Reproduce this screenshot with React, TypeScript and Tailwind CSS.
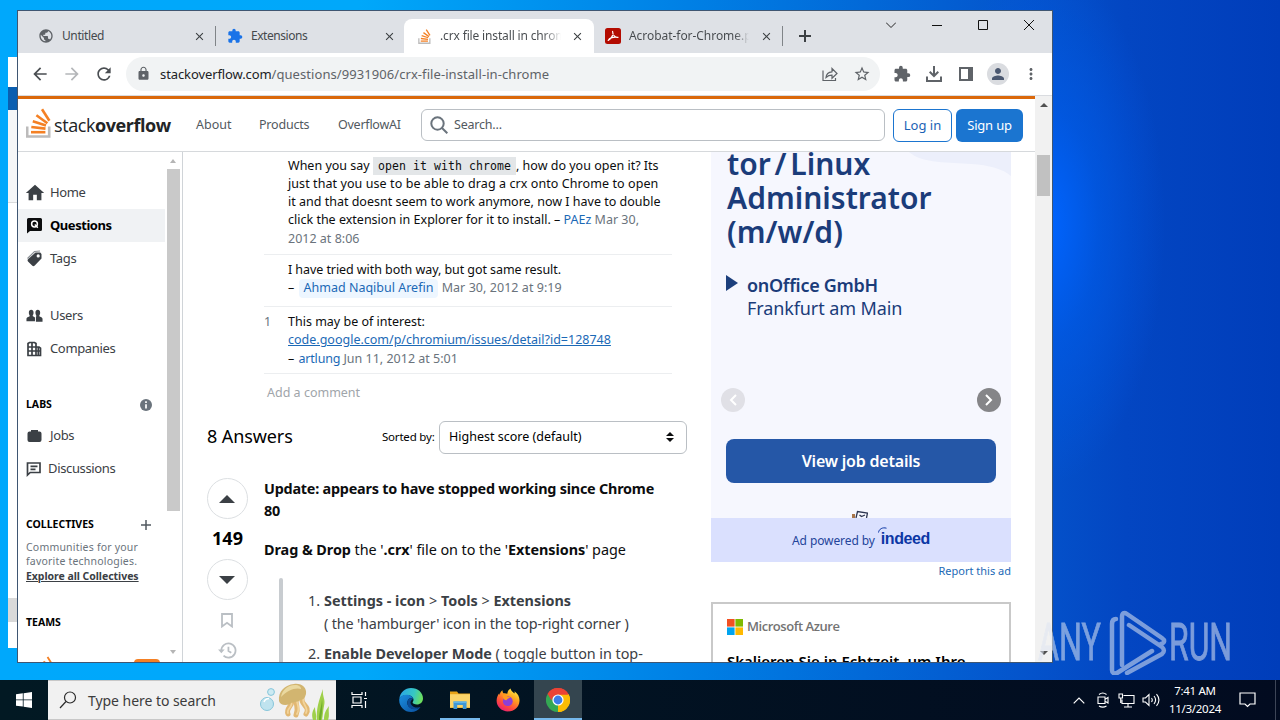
import React from 'react';
import { clsx } from 'clsx';
import {
  MdArrowBack,
  MdArrowForward,
  MdClose,
  MdExtension,
  MdHome,
  MdLock,
  MdMoreVert,
  MdOutlineFileDownload,
  MdPerson,
  MdPublic,
  MdRefresh,
  MdStarBorder,
} from 'react-icons/md';

/* ---------- logos and small drawings ---------- */

function StackLogo({ className }: { className?: string }) {
  return (
    <svg viewBox="0 0 25 30" className={className} fill="none">
      <path d="M1.2 18.5v10h22v-10" stroke="#bcbbbb" strokeWidth="2.6" />
      <g stroke="#f48024" strokeWidth="2.6">
        <path d="M5 24.2h14.4" />
        <path d="M5.3 19l14.2 1.6" />
        <path d="M6.8 13.3l13.2 4.2" />
        <path d="M10.4 7.3l11 8" />
        <path d="M16 1.2l7.4 11.6" />
      </g>
    </svg>
  );
}

function PdfIcon() {
  return (
    <svg viewBox="0 0 16 16" className="w-4 h-4 shrink-0">
      <rect width="16" height="16" rx="2.5" fill="#b30b00" />
      <path
        d="M7.6 3.4c1.4 3-1.2 7.2-4.4 9 1-2.4 5.4-4 9.8-3-2.6.4-5.6-2.4-5.4-6z"
        fill="none"
        stroke="#fff"
        strokeWidth="1.2"
        strokeLinejoin="round"
      />
    </svg>
  );
}

function TabClose({ className }: { className?: string }) {
  return <MdClose className={clsx('w-[13px] h-[13px] shrink-0 text-[#3c4043]', className)} />;
}

function EdgeIcon() {
  return (
    <svg viewBox="0 0 24 24" className="w-6 h-6">
      <defs>
        <linearGradient id="edgeTop" x1="0" y1="0.3" x2="1" y2="0.5">
          <stop offset="0" stopColor="#2aa6e8" />
          <stop offset="0.6" stopColor="#36c7c3" />
          <stop offset="1" stopColor="#6ee05a" />
        </linearGradient>
        <linearGradient id="edgeLow" x1="0" y1="0" x2="1" y2="1">
          <stop offset="0" stopColor="#1b8fe0" />
          <stop offset="1" stopColor="#0a4f9e" />
        </linearGradient>
      </defs>
      <path d="M.4 10.5C1.2 4.4 6 0 12 0c7 0 12 4.8 12 10.4 0 3.7-2.9 6-6 6-2.6 0-4.4-1-4.4-1.9 0-.6.9-.9.9-2.7C14.5 8.700 11.3 7 8 7 4.5 7 1.5 8.2.4 10.5z" fill="url(#edgeTop)" />
      <path d="M.3 10.8C1.2 8.1 4.5 6.6 8 6.7c3 .1 5.7 1.6 6.3 4-3.3-1.6-6 .6-6 4.1 0 3.600 3.7 6.6 8.2 6.1 2-.2 3.8-1.2 4.9-2-2 3.3-5.4 5.1-9.2 5.1C5 24-.5 18 .3 10.8z" fill="url(#edgeLow)" />
      <path d="M8.3 14.8c0 4.2 3.7 7 8.2 6.4 2.2-.3 4-1.3 4.9-2.2-3 1.3-8 .6-9.6-3-.9-2 .4-4.3 2.5-5.3-3.3-1.6-6 .6-6 4.1z" fill="#0b4a94" />
    </svg>
  );
}

function FolderIcon() {
  return (
    <svg viewBox="0 0 22 20" className="w-[22px] h-5">
      <path d="M1 1.5h7l1.5 2H21V18H1z" fill="#e8a317" />
      <path d="M1 4.2h20v13.3H1z" fill="#fbd469" />
      <path d="M4.5 19v-7.5h13V19h-3.7v-4H8.2v4z" fill="#3f97d6" />
      <path d="M4.5 11.500h13V13h-13z" fill="#5fb4ea" />
    </svg>
  );
}

function FirefoxIcon() {
  return (
    <svg viewBox="0 0 24 24" className="w-6 h-6">
      <defs>
        <linearGradient id="foxBody" x1="0.8" y1="0" x2="0.2" y2="1">
          <stop offset="0" stopColor="#fff24a" />
          <stop offset="0.35" stopColor="#ffa41f" />
          <stop offset="0.7" stopColor="#ff4a3d" />
          <stop offset="1" stopColor="#e5177b" />
        </linearGradient>
      </defs>
      <path d="M14.5.5c.4 2.2 2.2 3.2 3.8 5 .6-.5.4-1.5.2-2.3C22 5.8 23.7 9 23.5 13c-.3 6-5.3 10.5-11.5 10.5S.6 18.8.6 12.8c0-3 1-5.6 2.7-7.6 0 .8.2 1.4.4 1.8C4 4.8 5.2 3 6.5 2.2c-.1 1.3.3 2.5 1 3.1 1.6-.2 2.7 0 3.8.5.3-2.3 1.400-4.3 3.2-5.3z" fill="url(#foxBody)" />
      <circle cx="11.8" cy="13.2" r="4.9" fill="#8d3fd6" />
      <path d="M6.5 7c2-.6 3.8.2 5 1.4 1 .2 2.3.3 2.6.6-.4 1.6-3 1.4-3.6 3.2-1.6 0-3.5-1-4-5.2z" fill="#ff9a1f" />
    </svg>
  );
}

function ChromeIcon() {
  return (
    <svg viewBox="0 0 24 24" className="w-6 h-6">
      <path d="M12 12L1.6 6A12 12 0 0 1 22.4 6z" fill="#ea4335" />
      <path d="M12 12L22.4 6A12 12 0 0 1 12 24z" fill="#fbbc05" />
      <path d="M12 12L12 24A12 12 0 0 1 1.6 6z" fill="#34a853" />
      <path d="M12 6.5h10.7A12 12 0 0 1 12 24l5-9z" fill="#fbbc05" />
      <path d="M1.6 6l5.3 9.2L12 12V6.5h-5z" fill="#34a853" />
      <path d="M1.6 6A12 12 0 0 1 22.6 6.5H12L7 9.2 5.5 12.6z" fill="#ea4335" />
      <circle cx="12" cy="12" r="5.6" fill="#fff" />
      <circle cx="12" cy="12" r="4.4" fill="#3b7de9" />
    </svg>
  );
}

function SeaArt() {
  return (
    <svg viewBox="0 0 72 40" className="w-[72px] h-10">
      <circle cx="7" cy="24" r="6.5" fill="#bfe3ee" stroke="#86c6da" />
      <circle cx="11" cy="12" r="3.4" fill="#cdeaf2" stroke="#86c6da" />
      <path d="M4 22c1-3 3-3.5 5-3.5" stroke="#fff" strokeWidth="1.5" fill="none" />
      <g fill="none" stroke="#e2b873" strokeWidth="5" strokeLinecap="round">
        <path d="M31 20c4 4-6 8-3 14" />
        <path d="M36 20c0 7 3 8 0 15" />
        <path d="M42 18c-2 7 9 8 4 16" />
      </g>
      <g fill="none" stroke="#f2d49c" strokeWidth="1.800" strokeLinecap="round">
        <path d="M31 22c3 4-5 7-3 11" />
        <path d="M37 21c1 6 3 8 0 13" />
        <path d="M43 19c0 7 6 9 3 14" />
      </g>
      <path d="M19 21C18 11 25 5 34 4c8-1 13 4 12 10-1 4-3 6-6 6-3 3-7 1-10 4-5 2-10 1-11-3z" fill="#d2b570" />
      <path d="M21 17c1-6 6-12 14-12 4 0 6 2 6 4-5-2-14 1-20 8z" fill="#ead9a0" />
      <path d="M53 40c-2-6 0-10 2-13 0 5 2 8 1 13zM57 40c-1-11 2-20 6-31-1 8 3 10 1 17-1 5-1 9-2 14zM64 40c0-7 2-10 5-14-1 5 1 9-1 14z" fill="#9fd04a" />
      <path d="M59 40c0-9 3-14 3-22 1 8 0 14-1 22z" fill="#6fae2c" />
    </svg>
  );
}

/* ---------- browser chrome ---------- */

function TabStrip() {
  return (
    <div className="flex h-[42px] bg-[#dee1e6] text-[12px] text-[#45494d]">
      <div className="flex items-center w-[198px] pl-5 pt-2">
        <MdPublic className="w-4 h-4 shrink-0 text-[#5f6368]" />
        <span className="ml-2 w-[132px] tracking-[-0.4px]">Untitled</span>
        <TabClose />
        <span className="ml-[9px] w-px h-5 bg-[#808488]" />
      </div>
      <div className="flex items-center w-[188px] pl-[11px] pt-2">
        <MdExtension className="w-4 h-4 shrink-0 text-[#1a73e8]" />
        <span className="ml-2 w-[132px] tracking-[-0.45px]">Extensions</span>
        <TabClose />
      </div>
      <div className="flex items-center w-[190px] h-[34px] mt-2 pl-[14px] rounded-t-lg bg-white">
        <StackLogo className="w-[13px] h-[15px] shrink-0" />
        <span className="ml-[9px] w-[121px] mr-[10px] overflow-hidden whitespace-nowrap bg-gradient-to-r from-[#45494d] from-85% to-white bg-clip-text text-transparent tracking-[-0.15px]">
          .crx file install in chrome
        </span>
        <TabClose />
      </div>
      <div className="flex items-center w-[190px] pl-[11px] pt-2">
        <PdfIcon />
        <span className="ml-2 w-[120px] mr-[11px] overflow-hidden whitespace-nowrap bg-gradient-to-r from-[#45494d] from-88% to-[#dee1e6] bg-clip-text text-transparent tracking-[-0.05px]">
          Acrobat-for-Chrome.pdf
        </span>
        <TabClose />
        <span className="ml-[9px] w-px h-5 bg-[#808488]" />
      </div>
      <div className="flex items-center pl-[15px] pt-2">
        <svg viewBox="0 0 12 12" className="w-3 h-3" stroke="#3c4043" strokeWidth="2">
          <path d="M6 0v12M0 6h12" />
        </svg>
      </div>
      <div className="flex items-start ml-auto pt-[9px] mr-[18px]">
        <svg viewBox="0 0 10 10" className="w-[10px] h-[10px] mr-[36px]" fill="none" stroke="#222">
          <path d="M0 2.5l5 5 5-5" />
        </svg>
        <svg viewBox="0 0 10 10" className="w-[10px] h-[10px] mr-[36px]" stroke="#111">
          <path d="M0 5.5h10" />
        </svg>
        <svg viewBox="0 0 10 10" className="w-[10px] h-[10px] mr-[36px]" fill="none" stroke="#111">
          <path d="M.5.5h9v9h-9z" />
        </svg>
        <svg viewBox="0 0 10 10" className="w-[10px] h-[10px]" fill="none" stroke="#111">
          <path d="M0 0l10 10M10 0L0 10" />
        </svg>
      </div>
    </div>
  );
}

function Toolbar() {
  return (
    <div className="flex items-center h-[43px] bg-white border-b border-[#dadce0] text-[#5f6368]">
      <MdArrowBack className="w-5 h-5 ml-3 text-[#4a4e52]" />
      <MdArrowForward className="w-5 h-5 ml-3 text-[#b4b6b9]" />
      <MdRefresh className="w-5 h-5 ml-3 text-[#4a4e52]" />
      <div className="flex items-center w-[754px] h-[34px] ml-3 pl-[10px] pr-[9px] rounded-full bg-[#f1f3f4]">
        <MdLock className="w-[15px] h-[15px] mb-px" />
        <span className="ml-[9px] mt-px text-[13px] whitespace-nowrap tracking-[0.07px]">
          <span className="text-[#202124] tracking-[-0.1px]">stackoverflow.com</span>/questions/9931906/crx-file-install-in-chrome
        </span>
        <svg viewBox="0 0 16 16" className="w-4 h-4 ml-auto" fill="none" stroke="#5f6368" strokeWidth="1.200">
          <path d="M1 4.5V14.5h12.5V12" />
          <path d="M4 11.5c.3-3.8 2.5-5.5 6-5.7V2.5l5 5-5 4.8V9.2c-2.6 0-4.3.7-6 2.3z" />
        </svg>
        <MdStarBorder className="w-[18px] h-[18px] ml-[15px]" />
      </div>
      <MdExtension className="w-[18px] h-[18px] ml-[13px]" />
      <svg viewBox="0 0 16 16" className="w-4 h-4 ml-[15px]" fill="none" stroke="#5f6368" strokeWidth="2">
        <path d="M8 0v9.500M3.700 5.800L8 10l4.300-4.200M1 10.500V15h14v-4.500" />
      </svg>
      <svg viewBox="0 0 14 14" className="w-[14px] h-[14px] ml-[17px]">
        <path d="M1 1h12v12H1z" fill="none" stroke="#5f6368" strokeWidth="2" />
        <path d="M9 0h5v14H9z" fill="#5f6368" />
      </svg>
      <span className="flex items-center justify-center w-[22px] h-[22px] ml-[14px] rounded-full bg-[#dadce0]">
        <MdPerson className="w-[18px] h-[18px] text-[#4b5870]" />
      </span>
      <MdMoreVert className="w-[18px] h-[18px] ml-[13px]" />
    </div>
  );
}

/* ---------- page ---------- */

function SiteHeader() {
  return (
    <header className="flex items-center h-[56px] border-t-[3px] border-b border-t-[#da680b] border-b-[#d6d9dc] pl-2 text-[13px] text-[#525960] whitespace-nowrap">
      <StackLogo className="w-[25px] h-[30px] -mt-1" />
      <span className="ml-[3px] mt-px w-[142px] font-['Open_Sans'] text-[18px] text-[#222426] tracking-[-0.42px]">
        stack<b>overflow</b>
      </span>
      <span className="w-[63px] mt-px text-[12.5px]">About</span>
      <span className="w-[79px] mt-px text-[12.5px] tracking-[-0.2px]">Products</span>
      <span className="w-[83px] mt-px text-[12.5px] tracking-[-0.25px]">OverflowAI</span>
      <div className="flex items-center w-[464px] h-8 px-2 rounded-md border border-[#babfc4]">
        <svg viewBox="0 0 18 18" className="w-[18px] h-[18px]" fill="none" stroke="#6a737c" strokeWidth="2">
          <circle cx="7.500" cy="7.500" r="6.200" />
          <path d="M12 12l5.300 5.300" />
        </svg>
        <span className="ml-[6px] mt-px text-[12.5px] tracking-[-0.2px]">Search...</span>
      </div>
      <span className="flex items-center justify-center w-[59px] h-[33px] ml-2 pt-px rounded-md border border-[#1b75d0] text-[#1b62b5]">
        Log in
      </span>
      <span className="flex items-center justify-center w-[67px] h-[33px] ml-1 pt-px rounded-md bg-[#1b75d0] text-white tracking-[-0.2px]">
        Sign up
      </span>
    </header>
  );
}

function NavRow({ icon, label, active }: { icon: React.ReactNode; label: string; active?: boolean }) {
  return (
    <div
      className={clsx(
        'flex items-center h-[33px] w-[147px] pl-2 text-[13px]',
        active ? 'bg-[#f0f2f4] font-bold text-black tracking-[-0.45px]' : 'text-[#3b4045] tracking-[-0.35px]'
      )}
    >
      <span className="flex w-6 shrink-0">{icon}</span>
      {label}
    </div>
  );
}

function LeftNav() {
  return (
    <nav className="flex w-[165px] h-[510px] border-r border-[#d0d4d8] overflow-hidden">
      <div className="w-[148px] pt-6 shrink-0">
        <NavRow icon={<MdHome className="w-[22px] h-[22px] -ml-[2px]" />} label="Home" />
        <NavRow
          active
          label="Questions"
          icon={
            <svg viewBox="0 0 17 17" className="w-[17px] h-[17px]">
              <path d="M2.500 1h12A1.500 1.500 0 0 1 16 2.500v10a1.500 1.500 0 0 1-1.500 1.500H4l-3 2.500v-14A1.500 1.500 0 0 1 2.500 1z" fill="#0c0d0e" />
              <circle cx="8.500" cy="7" r="2.900" fill="none" stroke="#fff" strokeWidth="1.500" />
              <path d="M8.800 7.500l3 3.200" stroke="#fff" strokeWidth="1.300" />
            </svg>
          }
        />
        <NavRow
          label="Tags"
          icon={
            <svg viewBox="0 0 17 17" className="w-[17px] h-[17px]">
              <path d="M1.500 8.500l7-7L14 1" fill="none" stroke="#8c9196" strokeWidth="1.200" />
              <path fillRule="evenodd" d="M9.500 2.500h4.700L15.500 4v4.500l-7 7.200c-.7.600-1.500.6-2.100 0L2 11.400c-.6-.6-.6-1.500 0-2.100zM12.200 4.300a1.600 1.600 0 1 0 0 3.200 1.600 1.600 0 0 0 0-3.200z" fill="#3b4045" />
            </svg>
          }
        />
        <div className="h-6" />
        <NavRow
          label="Users"
          icon={
            <svg viewBox="0 0 18 14" className="w-[17px] h-[14px]" fill="#3b4045">
              <path d="M3 3.500C3 1.500 4 .5 5.500.5S8 1.500 8 3.500 7 6 7 7l2.500 1.500v4H.5v-2.500C.5 8 4 8 4 7S3 5.500 3 3.500z" />
              <path d="M10 3.500c0-2 1-3 2.500-3s2.500 1 2.500 3S14 6 14 7s3.500 1 3.500 3v3h-7V8L11 7c0-1-1-1.500-1-3.500z" />
            </svg>
          }
        />
        <NavRow
          label="Companies"
          icon={
            <svg viewBox="0 0 16 16" className="w-4 h-4" fill="none" stroke="#3b4045" strokeWidth="1.700">
              <path d="M2 14.500V2.500L3.500 1.500H8.500L10 2.500V14.500M6 1.500v13M2 6h8M2 10h12.500M10 6h3l1.500 1.200v7.300H1.200M12.300 6v8" />
            </svg>
          }
        />
        <div className="flex items-center justify-between h-[18px] mt-[31px] pl-2 pr-[14px] text-[10.5px] font-bold">
          LABS
          <svg viewBox="0 0 12 12" className="w-3 h-3">
            <circle cx="6" cy="6" r="6" fill="#6a737c" />
            <path d="M6 2.200v1.800M6 5.200v4.300" stroke="#fff" strokeWidth="1.700" />
          </svg>
        </div>
        <div className="h-[5px]" />
        <NavRow
          label="Jobs"
          icon={
            <svg viewBox="0 0 17 14" className="w-[17px] h-[14px]" fill="#3b4045">
              <path d="M5 1h7v1.500h1.500a2 2 0 0 1 2 2v6.500a2 2 0 0 1-2 2h-10a2 2 0 0 1-2-2V4.500a2 2 0 0 1 2-2H5z" />
            </svg>
          }
        />
        <div className="flex items-center h-[33px] pl-2 text-[13px] text-[#3b4045] tracking-[-0.35px]">
          <svg viewBox="0 0 16 16" className="w-4 h-4 mr-[6px]" fill="none" stroke="#3b4045" strokeWidth="1.700">
            <path d="M1.500 14V2h12.500v9.500H4.200zM4.500 5.300h7M4.500 8.300h5" />
          </svg>
          Discussions
        </div>
        <div className="flex items-center justify-between h-[18px] mt-[31px] pl-2 pr-[15px] text-[10.5px] font-bold">
          COLLECTIVES
          <svg viewBox="0 0 10 10" className="w-[10px] h-[10px]" stroke="#525960" strokeWidth="1.500">
            <path d="M5 0v10M0 5h10" />
          </svg>
        </div>
        <div className="pl-2 mt-[6px] text-[10.5px] leading-[14px] text-[#6a737c] whitespace-nowrap tracking-[0.2px]">
          Communities for your
          <br />
          favorite technologies.
          <br />
          <b className="text-[#3b4045] underline leading-[16px] tracking-[-0.04px]">Explore all Collectives</b>
        </div>
        <div className="mt-[29px] pl-2 text-[10.5px] leading-[18px] font-bold">TEAMS</div>
        <div className="flex justify-between mt-[25px] pl-[18px] pr-[6px]">
          <StackLogo className="w-[18px] h-[22px]" />
          <span className="w-[26px] h-4 mt-[3px] rounded bg-[#f48024]" />
        </div>
      </div>
      <div className="flex flex-col items-center w-[14px] pt-[7px]">
        <span className="border-x-[3px] border-x-transparent border-b-[4px] border-b-[#b5b5b5]" />
        <span className="w-[13px] h-[342px] mt-[6px] bg-[#c9c9c9]" />
        <span className="mt-[139px] border-x-[3px] border-x-transparent border-t-[4px] border-t-[#b5b5b5]" />
      </div>
    </nav>
  );
}

const link = 'text-[#1b69b6]';
const muted = 'text-[#6a737c]';

function Comments() {
  return (
    <div className="w-[408px] ml-[81px] h-[222px] text-[12.5px] leading-[18.3px] text-[#0c0d0e] whitespace-nowrap">
      <div className="h-[103px] pt-[4.5px] pl-6 border-b border-[#eceef0]">
        When you say{' '}
        <code className="px-[5px] py-[2px] bg-[#e3e6e8] font-['DejaVu_Sans_Mono'] text-[11.5px] tracking-[0.08px]">
          open it with chrome
        </code>
        , how do you open it? Its
        <br />
        <span className="tracking-[0.08px]">just that you use to be able to drag a crx onto Chrome to open</span>
        <br />
        it and that doesnt seem to work anymore, now I have to double
        <br />
        click the extension in Explorer for it to install. – <span className={link}>PAEz</span>{' '}
        <span className={muted}>Mar 30,</span>
        <br />
        <span className={muted}>2012 at 8:06</span>
      </div>
      <div className="h-[52px] pt-[6px] pl-6 border-b border-[#eceef0]">
        <span className="tracking-[-0.07px]">I have tried with both way, but got same result.</span>
        <br />–{' '}
        <span className="inline-block ml-px px-[5px] rounded-sm bg-[#edf6ff] text-[#1b69b6]">Ahmad Naqibul Arefin</span>{' '}
        <span className="text-[#6a737c] tracking-[0.05px]">Mar 30, 2012 at 9:19</span>
      </div>
      <div className="flex h-[67px] pt-[6px] border-b border-[#eceef0]">
        <span className="w-6 text-[#6a737c]">1</span>
        <div>
          This may be of interest:
          <br />
          <span className="text-[#1b69b6] underline">code.google.com/p/chromium/issues/detail?id=128748</span>
          <br />– <span className="ml-px text-[#1b69b6] tracking-[-0.2px]">artlung</span>{' '}
          <span className={muted}>Jun 11, 2012 at 5:01</span>
        </div>
      </div>
    </div>
  );
}

function VoteButton({ down }: { down?: boolean }) {
  return (
    <span className="flex items-center justify-center w-[41px] h-[41px] pr-px rounded-full border border-[#dcdfe2]">
      <svg viewBox="0 0 16 8" className={clsx('w-4 h-2', down && 'rotate-180')}>
        <path d="M0 8L8 0l8 8z" fill="#3b4045" />
      </svg>
    </span>
  );
}

function Answer() {
  return (
    <div className="flex mt-5 ml-6">
      <div className="flex flex-col items-center w-[41px]">
        <VoteButton />
        <span className="h-10 leading-[38px] text-[18px] font-bold">149</span>
        <VoteButton down />
        <svg viewBox="0 0 12 15" className="w-3 h-[15px] mt-[13px] mr-[2px]" fill="none" stroke="#babfc4" strokeWidth="1.800">
          <path d="M1 1h10v12.500L6 9.800 1 13.500z" />
        </svg>
        <svg viewBox="0 0 20 18" className="w-[19px] h-[17px] mt-[14px] mr-px" fill="none" stroke="#babfc4" strokeWidth="1.900">
          <path d="M3.500 9a7.500 7.500 0 1 1 2.300 5.400M11 5v4.500l3 1.800" />
          <path d="M0 8l3.500 4L7 8z" fill="#babfc4" stroke="none" />
        </svg>
      </div>
      <div className="ml-4 text-[14.400px] leading-[21.500px] text-[#0c0d0e] whitespace-nowrap">
        <b className="block tracking-[-0.22px]">
          Update: appears to have stopped working since Chrome
          <br />
          80
        </b>
        <p className="mt-[18px] tracking-[-0.05px]">
          <b>Drag &amp; Drop</b> the '<b>.crx</b>' file on to the '<b>Extensions</b>' page
        </p>
        <div className="flex ml-[15px] mt-[17px] text-[#3b4045]">
          <span className="w-1 h-[90px] rounded-t bg-[#c8ccd0]" />
          <div className="ml-[25px] mt-[11px] leading-[23px]">
            <div className="flex">
              <span className="w-4">1.</span>
              <div>
                <b>Settings - icon</b> &gt; <b>Tools</b> &gt; <b>Extensions</b>
                <br />
                <span className="tracking-[-0.16px]">( the 'hamburger' icon in the top-right corner )</span>
              </div>
            </div>
            <div className="flex mt-[7px]">
              <span className="w-4">2.</span>
              <div className="tracking-[-0.05px]">
                <b>Enable Developer Mode</b> ( toggle button in top-
              </div>
            </div>
          </div>
        </div>
      </div>
    </div>
  );
}

function JobAd() {
  return (
    <div className="w-[300px] h-[410px] bg-[#f6f7fe] text-[#1b3c7a]">
      <div className="relative h-[366px] overflow-hidden">
        <svg viewBox="0 0 102 24" className="absolute right-0 top-0 w-[102px] h-6">
          <path d="M0 0c14 12 40 10 62 12 18 1 32 5 40 12V0z" fill="#eceffb" />
        </svg>
        <h2 className="relative -mt-[5px] ml-4 text-[30px] leading-[34px] font-semibold whitespace-nowrap">
          <span className="[word-spacing:-4px]">tor / Linux</span>
          <br />
          Administrator
          <br />
          (m/w/d)
        </h2>
        <div className="flex ml-[15px] mt-[25px]">
          <svg viewBox="0 0 12 16" className="w-3 h-4 mt-px">
            <path d="M0 0l12 8-12 8z" fill="#1c3f7c" />
          </svg>
          <div className="ml-[9px] text-[18px] leading-[23px] whitespace-nowrap">
            <b className="font-semibold tracking-[-0.3px]">onOffice GmbH</b>
            <br />
            <span className="tracking-[-0.1px]">Frankfurt am Main</span>
          </div>
        </div>
        <div className="flex justify-between mt-[68px] px-[10px]">
          <span className="flex items-center justify-center w-6 h-6 rounded-full bg-[#e0e0e6]">
            <svg viewBox="0 0 8 12" className="w-2 h-3" fill="none" stroke="#fff" strokeWidth="2">
              <path d="M7 1L2 6l5 5" />
            </svg>
          </span>
          <span className="flex items-center justify-center w-6 h-6 rounded-full bg-[#858588]">
            <svg viewBox="0 0 8 12" className="w-2 h-3" fill="none" stroke="#fff" strokeWidth="2">
              <path d="M1 1l5 5-5 5" />
            </svg>
          </span>
        </div>
        <div className="flex items-center justify-center w-[270px] h-11 ml-[15px] mt-[27px] rounded-lg bg-[#2557a7] text-white text-[16px] font-semibold tracking-[-0.2px]">
          View job details
        </div>
        <svg viewBox="0 0 16 8" className="w-4 h-2 ml-[141px] mt-[27px]" fill="none">
          <path d="M4 8l1.500-6.500 10 1.500-1 5M7.500 5l2 1.500L13 5" stroke="#2d3550" strokeWidth="1.300" />
          <path d="M0 4h3v4H0z" fill="#a8754a" />
        </svg>
      </div>
      <div className="flex items-center justify-center h-11 bg-[#dae0fe] text-[12px] text-[#24449a] whitespace-nowrap">
        <span className="mt-px tracking-[-0.1px]">Ad powered by</span>
        <span className="relative ml-[6px] -mt-[3px] font-['Liberation_Sans'] font-bold text-[16px] tracking-[-0.4px] text-[#0c37a5]">
          <svg viewBox="0 0 9 6" className="absolute -left-[3px] top-0 w-[9px] h-[6px]" fill="none" stroke="#0c37a5">
            <path d="M.5 5.500C1 2 4.500 0 8.500 1.200" />
          </svg>
          indeed
        </span>
      </div>
    </div>
  );
}

function Sidebar() {
  return (
    <aside className="w-[300px] ml-6">
      <JobAd />
      <div className="h-10 text-right text-[11px] leading-[18px] text-[#1b69b6]">Report this ad</div>
      <div className="h-[80px] border-2 border-[#c9c9c9] px-[14px] pt-[14px] text-[#000] whitespace-nowrap">
        <div className="flex items-center text-[13px] font-['Open_Sans'] font-semibold text-[#737373] h-[18px] tracking-[-0.45px]">
          <svg viewBox="0 0 16 16" className="w-4 h-4 mr-1">
            <path d="M0 0h7.600v7.600H0z" fill="#f25022" />
            <path d="M8.400 0H16v7.600H8.400z" fill="#7fba00" />
            <path d="M0 8.400h7.600V16H0z" fill="#00a4ef" />
            <path d="M8.400 8.400H16V16H8.400z" fill="#ffb900" />
          </svg>
          Microsoft Azure
        </div>
        <div className="mt-[13px] text-[15px] leading-6 font-semibold">Skalieren Sie in Echtzeit, um Ihre</div>
      </div>
    </aside>
  );
}

function BrowserWindow() {
  return (
    <div className="absolute left-[17px] top-[10px] w-[1036px] h-[653px] flex flex-col border border-[#3f5672] bg-white overflow-hidden">
      <TabStrip />
      <Toolbar />
      <div className="flex h-[566px] shrink-0">
        <div className="w-[1017px]">
          <SiteHeader />
          <div className="flex h-[510px] overflow-hidden">
            <LeftNav />
            <main className="w-[504px]">
              <Comments />
              <div className="ml-[84px] text-[12.5px] leading-[37px] text-[#a0a5aa] h-[38px]">Add a comment</div>
              <div className="flex items-center h-[42px] mt-[4px] ml-6 whitespace-nowrap">
                <span className="text-[18px] w-[175px] -mt-[2px] tracking-[-0.1px]">8 Answers</span>
                <span className="text-[11.5px] w-[57px] tracking-[-0.2px]">Sorted by:</span>
                <div className="flex items-center justify-between w-[248px] h-[33px] px-[9px] pr-3 rounded-md border border-[#babfc4] text-[12.5px]">
                  <span className="mt-px">Highest score (default)</span>
                  <svg viewBox="0 0 8 10" className="w-2 h-[10px]">
                    <path d="M0 4l4-4 4 4zM0 6l4 4 4-4z" fill="#0c0d0e" />
                  </svg>
                </div>
              </div>
              <Answer />
            </main>
            <Sidebar />
          </div>
        </div>
        <div className="flex flex-col items-center w-[17px] bg-[#f1f1f1] pt-[7px]">
          <span className="border-x-[4px] border-x-transparent border-b-[4px] border-b-[#505050]" />
          <span className="w-[13px] h-[41px] mt-[48px] bg-[#c1c1c1]" />
          <span className="mt-[455px] border-x-[4px] border-x-transparent border-t-[4px] border-t-[#505050]" />
        </div>
      </div>
    </div>
  );
}

/* ---------- desktop ---------- */

function BackWindow() {
  return (
    <div className="absolute left-2 top-[57px] w-10 h-[591px] bg-white">
      <div className="h-[30px]" />
      <div className="h-[23px] bg-[#0a5eb0]" />
      <div className="h-[93px] bg-[#f5f6f7] border-b border-[#dadbdc]" />
      <div className="h-[395px]" />
      <div className="h-[24px] bg-[#d9d9d9]" />
    </div>
  );
}

function Watermark() {
  return (
    <svg
      viewBox="0 0 200 70"
      className="absolute left-[1035px] top-[605px] w-[200px] h-[70px] opacity-55"
      fill="none"
      stroke="#dfe6f2"
    >
      <g fill="#dfe6f2" strokeWidth="0.8" fontFamily="Roboto" fontSize="52">
        <text x="3" y="55" textLength="63" lengthAdjust="spacingAndGlyphs">
          ANY
        </text>
        <text x="134" y="55" textLength="63" lengthAdjust="spacingAndGlyphs">
          RUN
        </text>
      </g>
      <g strokeWidth="4.5" strokeLinejoin="round" strokeLinecap="round">
        <path d="M81 14c-3 0-4 2-4 5v46c0 3 2 4 5 3l35-22" />
        <path d="M87 60V12c0-4 2-5 5-3l35 24c3 2 3 5-1 6" />
        <path d="M94 24l33 22c3 3 2 5 0 7L92 72" transform="translate(0 -4)" />
      </g>
    </svg>
  );
}

function Taskbar() {
  return (
    <div className="absolute left-0 bottom-0 w-full h-10 flex items-center bg-gradient-to-r from-[#021923] to-[#020b20] text-white">
      <span className="flex items-center justify-center w-12 h-10">
        <svg viewBox="0 0 16 16" className="w-4 h-4" fill="#fff">
          <path d="M0 2.300L6.800 1.300v6.200H0zM7.600 1.200L16 0v7.500H7.600zM0 8.300h6.800v6.300L0 13.700zM7.600 8.300H16V16l-8.400-1.200z" />
        </svg>
      </span>
      <div className="flex items-center w-[288px] h-10 pl-[11px] bg-[#f1f1f1] border-y border-[#c8c8c8] text-[#3c3c3c]">
        <svg viewBox="0 0 18 18" className="w-[18px] h-[18px]" fill="none" stroke="#2b2b2b" strokeWidth="1.200">
          <circle cx="11" cy="6.500" r="5.500" />
          <path d="M7 10.500L1 17" />
        </svg>
        <span className="ml-[11px] text-[14px] whitespace-nowrap tracking-[-0.05px]">Type here to search</span>
        <span className="ml-auto mr-1">
          <SeaArt />
        </span>
      </div>
      <span className="flex items-center justify-center w-12 h-10">
        <svg viewBox="0 0 18 16" className="w-[18px] h-4" fill="none" stroke="#fff" strokeWidth="1.200">
          <path d="M1 0v2.500h10V0M1 16v-2.500h10V16M2 5h8v6H2zM14.500 0v4M14.500 9v7M13 6.500h3" />
        </svg>
      </span>
      <span className="flex items-center justify-center w-[54px] h-10">
        <EdgeIcon />
      </span>
      <span className="flex items-center justify-center w-10 h-10 ml-[2px] border-b-2 border-[#76b9ed] pt-[2px]">
        <FolderIcon />
      </span>
      <span className="flex items-center justify-center w-[54px] h-10 ml-px">
        <FirefoxIcon />
      </span>
      <span className="flex items-center justify-center w-12 h-10 -ml-px bg-[#34454f] border-b-2 border-[#76b9ed] pt-[2px]">
        <ChromeIcon />
      </span>
      <div className="flex items-center ml-auto h-10">
        <svg viewBox="0 0 12 7" className="w-3 h-[7px]" fill="none" stroke="#fff" strokeWidth="1.200">
          <path d="M.7 6.300L6 1l5.300 5.300" />
        </svg>
        <svg viewBox="0 0 12 16" className="w-3 h-4 ml-[12px]" fill="none" stroke="#fff" strokeWidth="1.100">
          <path d="M1 5h7v6.500H1zM8.500 7l2.500-1.500v5.500L8.500 9.500M2 2.500C4.500.5 7 .5 9.500 2.500M2 14c2.500 1.500 5 1.500 7.500 0" />
        </svg>
        <svg viewBox="0 0 17 15" className="w-[17px] h-[15px] ml-[9px]" fill="none" stroke="#fff" strokeWidth="1.100">
          <path d="M5.500 2.500H16v8H4v-4M10 10.500V14M6 14h8M1 1h3.500v4H1zM2.700 5v5" />
        </svg>
        <svg viewBox="0 0 18 14" className="w-[18px] h-[14px] ml-[7px]" fill="none" stroke="#fff" strokeWidth="1.100">
          <path d="M1 5h2.500L7 1.500v11L3.500 9H1zM9.500 5c1 1.300 1 2.700 0 4M12 3c2 2.500 2 5.500 0 8M14.500 1.200c3 3.500 3 8 0 11.600" />
        </svg>
        <div className="w-[68px] ml-px -mt-px text-center text-[11.5px] leading-[18px] tracking-[-0.3px]">
          7:41 AM
          <br />
          11/3/2024
        </div>
        <svg viewBox="0 0 17 16" className="w-[17px] h-4 ml-[10px]" fill="none" stroke="#fff" strokeWidth="1.200">
          <path d="M1 1h15v11h-5l-2.500 2.500L6 12H1z" />
        </svg>
        <span className="w-px h-10 ml-[19px] mr-1 bg-[#3d4557]" />
      </div>
    </div>
  );
}

export default function App() {
  return (
    <div className="relative w-[1280px] h-[720px] overflow-hidden font-['Noto_Sans',sans-serif] bg-[radial-gradient(ellipse_120px_260px_at_1045px_225px,#0064ff_0%,#005cec99_45%,transparent_100%),linear-gradient(90deg,#00a8fc_0%,#00a8fa_28%,#007ee4_55%,#0454cc_80%,#0346c2_88%,#003dba_100%)]">
      <BackWindow />
      <BrowserWindow />
      <Taskbar />
      <Watermark />
    </div>
  );
}
